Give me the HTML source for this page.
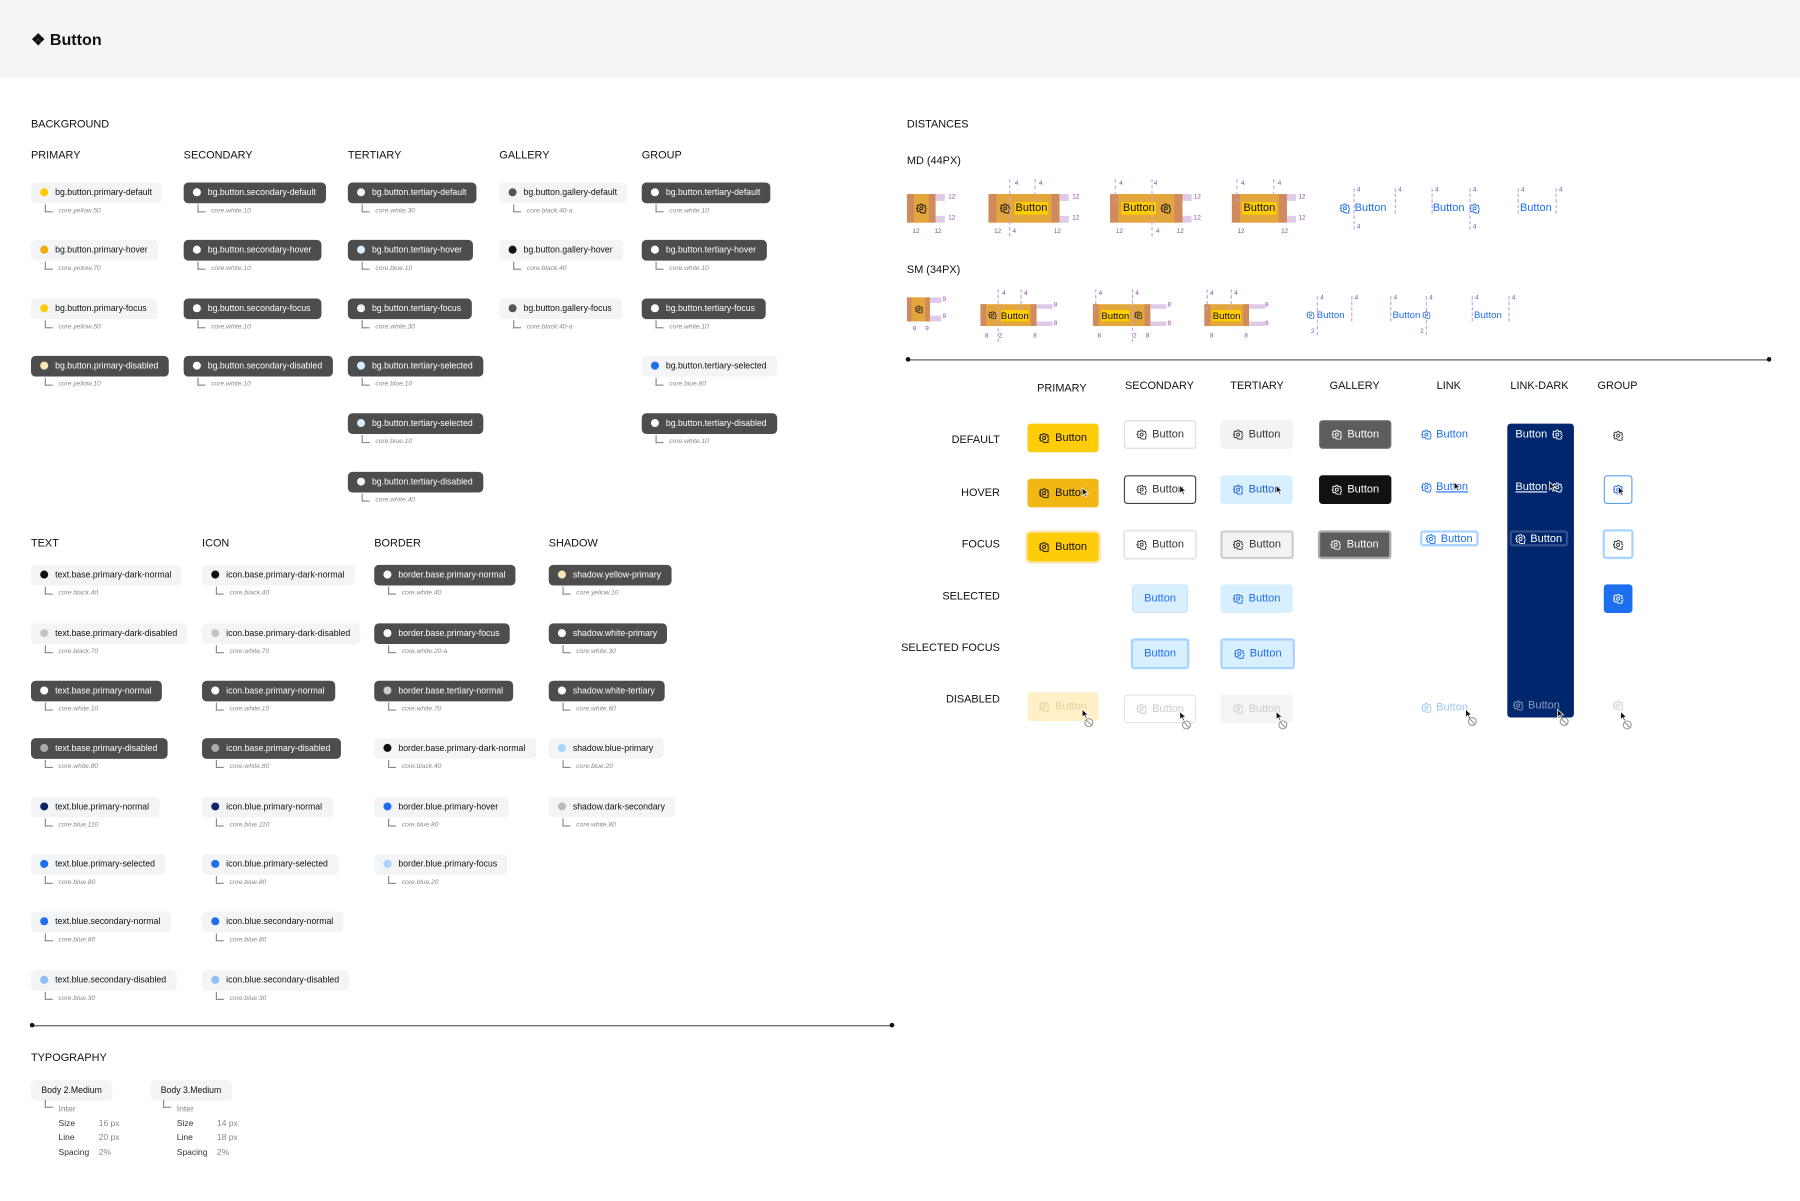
<!DOCTYPE html>
<html><head><meta charset="utf-8">
<style>
*{margin:0;padding:0;box-sizing:border-box}
html,body{width:1800px;height:1201px;overflow:hidden;background:#fff}
#w{position:absolute;left:0;top:0;width:1568px;height:1046px;transform:scale(1.148);transform-origin:0 0;font-family:"Liberation Sans",sans-serif;color:#111}
.hd{position:absolute;left:0;top:0;width:1568px;height:68px;background:#f5f5f5}
.h{position:absolute;font-size:9.5px;color:#111;white-space:nowrap;line-height:12px}
.t{position:absolute}
.c{display:inline-flex;align-items:center;height:18px;padding:0 9px 0 8px;border-radius:4px;background:#f3f4f6;font-size:7.6px;color:#111;white-space:nowrap}
.c.d{background:#4d4d4d;color:#fff}
.c i{width:7px;height:7px;border-radius:50%;margin-right:6px;display:inline-block;flex:none}
.s{position:relative;margin:1px 0 0 12px;height:12px;font-size:5.8px;font-style:italic;color:#888;padding-left:12px;line-height:12px;white-space:nowrap}
.s:before{content:"";position:absolute;left:0;top:0;width:6px;height:6px;border-left:1px solid #888;border-bottom:1px solid #888}
.b{position:absolute;height:25px;border-radius:3px;display:flex;align-items:center;justify-content:center;gap:5px;font-size:9.6px;white-space:nowrap}
.b svg,.g{width:9px;height:9px;flex:none}
.rl{position:absolute;font-size:9.5px;text-align:right;width:120px;white-space:nowrap}
.ch{position:absolute;font-size:9.5px;text-align:center;width:80px}
.m{position:absolute;background:#e3a63c;display:flex;align-items:center;justify-content:center;gap:4px;font-size:9.6px}
.pl{position:absolute;background:rgba(196,160,215,.55)}
.pn{position:absolute;font-size:5.5px;color:#8b4aa3}
.vl{position:absolute;width:1px;border-left:1px dashed #c7a3d6}
.lk{position:absolute;display:flex;align-items:center;gap:4px;font-size:9.6px;color:#1d6ff0;white-space:nowrap}
</style></head><body>
<svg width="0" height="0" style="position:absolute">
<defs>
<symbol id="gr" viewBox="0 0 24 24"><path fill="none" stroke="currentColor" stroke-width="2" d="M10 2h4l.6 2.9 2 .9 2.5-1.6 2.8 2.8-1.6 2.5.9 2 2.8.5v4l-2.8.6-.9 2 1.6 2.5-2.8 2.8-2.5-1.6-2 .9L14 22h-4l-.6-2.9-2-.9-2.5 1.6-2.8-2.8 1.6-2.5-.9-2L0 12.5v-1l2.8-.6.9-2L2.1 6.4 4.9 3.6l2.5 1.6 2-.9z"/><circle cx="12" cy="12" r="3.5" fill="none" stroke="currentColor" stroke-width="2"/></symbol>
<symbol id="cur" viewBox="0 0 10 14"><path d="M1 1v10l2.5-2.3 1.8 4 1.6-.7-1.8-3.9H8.5z" fill="#111" stroke="#fff" stroke-width=".9"/></symbol>
<symbol id="no" viewBox="0 0 12 12"><circle cx="6" cy="6" r="4.6" fill="#fff" stroke="#999" stroke-width="1.3"/><path d="M3 3l6 6" stroke="#999" stroke-width="1.3"/></symbol>
</defs></svg>
<div id="w">
<div class="hd"></div>
<div style="position:absolute;left:27px;top:26px;font-size:14px;font-weight:bold;line-height:16px">❖ Button</div>

<div class="h" style="left:27px;top:103px">BACKGROUND</div>
<div class="h" style="left:27px;top:130px">PRIMARY</div>
<div class="h" style="left:160px;top:130px">SECONDARY</div>
<div class="h" style="left:303px;top:130px">TERTIARY</div>
<div class="h" style="left:435px;top:130px">GALLERY</div>
<div class="h" style="left:559px;top:130px">GROUP</div>

<!-- primary -->
<div class="t" style="left:27px;top:158px"><div class="c"><i style="background:#ffc800"></i>bg.button.primary-default</div><div class="s">core.yellow.50</div></div>
<div class="t" style="left:27px;top:208px"><div class="c"><i style="background:#f2ab00"></i>bg.button.primary-hover</div><div class="s">core.yellow.70</div></div>
<div class="t" style="left:27px;top:259px"><div class="c"><i style="background:#ffcc00"></i>bg.button.primary-focus</div><div class="s">core.yellow.50</div></div>
<div class="t" style="left:27px;top:309px"><div class="c d"><i style="background:#fbe7b5"></i>bg.button.primary-disabled</div><div class="s">core.yellow.10</div></div>
<!-- secondary -->
<div class="t" style="left:160px;top:158px"><div class="c d"><i style="background:#fff"></i>bg.button.secondary-default</div><div class="s">core.white.10</div></div>
<div class="t" style="left:160px;top:208px"><div class="c d"><i style="background:#fff"></i>bg.button.secondary-hover</div><div class="s">core.white.10</div></div>
<div class="t" style="left:160px;top:259px"><div class="c d"><i style="background:#fff"></i>bg.button.secondary-focus</div><div class="s">core.white.10</div></div>
<div class="t" style="left:160px;top:309px"><div class="c d"><i style="background:#fff"></i>bg.button.secondary-disabled</div><div class="s">core.white.10</div></div>
<!-- tertiary -->
<div class="t" style="left:303px;top:158px"><div class="c d"><i style="background:#f4f4f4"></i>bg.button.tertiary-default</div><div class="s">core.white.30</div></div>
<div class="t" style="left:303px;top:208px"><div class="c d"><i style="background:#d8efff"></i>bg.button.tertiary-hover</div><div class="s">core.blue.10</div></div>
<div class="t" style="left:303px;top:259px"><div class="c d"><i style="background:#f4f4f4"></i>bg.button.tertiary-focus</div><div class="s">core.white.30</div></div>
<div class="t" style="left:303px;top:309px"><div class="c d"><i style="background:#d8efff"></i>bg.button.tertiary-selected</div><div class="s">core.blue.10</div></div>
<div class="t" style="left:303px;top:359px"><div class="c d"><i style="background:#d8efff"></i>bg.button.tertiary-selected</div><div class="s">core.blue.10</div></div>
<div class="t" style="left:303px;top:410px"><div class="c d"><i style="background:#f4f4f4"></i>bg.button.tertiary-disabled</div><div class="s">core.white.40</div></div>
<!-- gallery -->
<div class="t" style="left:435px;top:158px"><div class="c"><i style="background:#555"></i>bg.button.gallery-default</div><div class="s">core.black.40-a</div></div>
<div class="t" style="left:435px;top:208px"><div class="c"><i style="background:#111"></i>bg.button.gallery-hover</div><div class="s">core.black.40</div></div>
<div class="t" style="left:435px;top:259px"><div class="c"><i style="background:#555"></i>bg.button.gallery-focus</div><div class="s">core.black.40-a</div></div>
<!-- group -->
<div class="t" style="left:559px;top:158px"><div class="c d"><i style="background:#fff"></i>bg.button.tertiary-default</div><div class="s">core.white.10</div></div>
<div class="t" style="left:559px;top:208px"><div class="c d"><i style="background:#fff"></i>bg.button.tertiary-hover</div><div class="s">core.white.10</div></div>
<div class="t" style="left:559px;top:259px"><div class="c d"><i style="background:#fff"></i>bg.button.tertiary-focus</div><div class="s">core.white.10</div></div>
<div class="t" style="left:559px;top:309px"><div class="c"><i style="background:#1d6ff0"></i>bg.button.tertiary-selected</div><div class="s">core.blue.80</div></div>
<div class="t" style="left:559px;top:359px"><div class="c d"><i style="background:#fff"></i>bg.button.tertiary-disabled</div><div class="s">core.white.10</div></div>

<div class="h" style="left:27px;top:468px">TEXT</div>
<div class="h" style="left:176px;top:468px">ICON</div>
<div class="h" style="left:326px;top:468px">BORDER</div>
<div class="h" style="left:478px;top:468px">SHADOW</div>

<div class="t" style="left:27px;top:491px"><div class="c"><i style="background:#111"></i>text.base.primary-dark-normal</div><div class="s">core.black.40</div></div>
<div class="t" style="left:27px;top:542px"><div class="c"><i style="background:#c4c4c4"></i>text.base.primary-dark-disabled</div><div class="s">core.black.70</div></div>
<div class="t" style="left:27px;top:592px"><div class="c d"><i style="background:#fff"></i>text.base.primary-normal</div><div class="s">core.white.10</div></div>
<div class="t" style="left:27px;top:642px"><div class="c d"><i style="background:#aaa"></i>text.base.primary-disabled</div><div class="s">core.white.80</div></div>
<div class="t" style="left:27px;top:693px"><div class="c"><i style="background:#0b2766"></i>text.blue.primary-normal</div><div class="s">core.blue.110</div></div>
<div class="t" style="left:27px;top:743px"><div class="c"><i style="background:#1d6ff0"></i>text.blue.primary-selected</div><div class="s">core.blue.80</div></div>
<div class="t" style="left:27px;top:793px"><div class="c"><i style="background:#1d6ff0"></i>text.blue.secondary-normal</div><div class="s">core.blue.80</div></div>
<div class="t" style="left:27px;top:844px"><div class="c"><i style="background:#8fbff5"></i>text.blue.secondary-disabled</div><div class="s">core.blue.30</div></div>

<div class="t" style="left:176px;top:491px"><div class="c"><i style="background:#111"></i>icon.base.primary-dark-normal</div><div class="s">core.black.40</div></div>
<div class="t" style="left:176px;top:542px"><div class="c"><i style="background:#c4c4c4"></i>icon.base.primary-dark-disabled</div><div class="s">core.white.70</div></div>
<div class="t" style="left:176px;top:592px"><div class="c d"><i style="background:#fff"></i>icon.base.primary-normal</div><div class="s">core.white.10</div></div>
<div class="t" style="left:176px;top:642px"><div class="c d"><i style="background:#aaa"></i>icon.base.primary-disabled</div><div class="s">core.white.80</div></div>
<div class="t" style="left:176px;top:693px"><div class="c"><i style="background:#0b2766"></i>icon.blue.primary-normal</div><div class="s">core.blue.110</div></div>
<div class="t" style="left:176px;top:743px"><div class="c"><i style="background:#1d6ff0"></i>icon.blue.primary-selected</div><div class="s">core.blue.80</div></div>
<div class="t" style="left:176px;top:793px"><div class="c"><i style="background:#1d6ff0"></i>icon.blue.secondary-normal</div><div class="s">core.blue.80</div></div>
<div class="t" style="left:176px;top:844px"><div class="c"><i style="background:#8fbff5"></i>icon.blue.secondary-disabled</div><div class="s">core.blue.30</div></div>

<div class="t" style="left:326px;top:491px"><div class="c d"><i style="background:#fff"></i>border.base.primary-normal</div><div class="s">core.white.40</div></div>
<div class="t" style="left:326px;top:542px"><div class="c d"><i style="background:#fff"></i>border.base.primary-focus</div><div class="s">core.white.20-a</div></div>
<div class="t" style="left:326px;top:592px"><div class="c d"><i style="background:#ccc"></i>border.base.tertiary-normal</div><div class="s">core.white.70</div></div>
<div class="t" style="left:326px;top:642px"><div class="c"><i style="background:#111"></i>border.base.primary-dark-normal</div><div class="s">core.black.40</div></div>
<div class="t" style="left:326px;top:693px"><div class="c"><i style="background:#1d6ff0"></i>border.blue.primary-hover</div><div class="s">core.blue.80</div></div>
<div class="t" style="left:326px;top:743px"><div class="c"><i style="background:#a9d4ff"></i>border.blue.primary-focus</div><div class="s">core.blue.20</div></div>

<div class="t" style="left:478px;top:491px"><div class="c d"><i style="background:#fbe7b5"></i>shadow.yellow-primary</div><div class="s">core.yellow.10</div></div>
<div class="t" style="left:478px;top:542px"><div class="c d"><i style="background:#fff"></i>shadow.white-primary</div><div class="s">core.white.30</div></div>
<div class="t" style="left:478px;top:592px"><div class="c d"><i style="background:#fff"></i>shadow.white-tertiary</div><div class="s">core.white.60</div></div>
<div class="t" style="left:478px;top:642px"><div class="c"><i style="background:#a9d4ff"></i>shadow.blue-primary</div><div class="s">core.blue.20</div></div>
<div class="t" style="left:478px;top:693px"><div class="c"><i style="background:#bbb"></i>shadow.dark-secondary</div><div class="s">core.white.80</div></div>

<!-- left divider -->
<div style="position:absolute;left:27px;top:893px;width:751px;height:1px;background:#555"></div>
<div style="position:absolute;left:26px;top:891px;width:4px;height:4px;border-radius:50%;background:#111"></div>
<div style="position:absolute;left:775px;top:891px;width:4px;height:4px;border-radius:50%;background:#111"></div>

<div class="h" style="left:27px;top:916px">TYPOGRAPHY</div>
<div class="t" style="left:27px;top:939px"><div class="c" style="padding:0 9px">Body 2.Medium</div></div>
<div class="t" style="left:131px;top:939px"><div class="c" style="padding:0 9px">Body 3.Medium</div></div>
<div style="position:absolute;left:39px;top:958px;width:7px;height:7px;border-left:1px solid #888;border-bottom:1px solid #888"></div>
<div style="position:absolute;left:142px;top:958px;width:7px;height:7px;border-left:1px solid #888;border-bottom:1px solid #888"></div>
<div style="position:absolute;left:51px;top:960px;font-size:7.4px;color:#888;line-height:12.5px">Inter<br><span style="color:#333">Size</span><br><span style="color:#333">Line</span><br><span style="color:#333">Spacing</span></div>
<div style="position:absolute;left:86px;top:972.5px;font-size:7.4px;color:#888;line-height:12.5px">16 px<br>20 px<br>2%</div>
<div style="position:absolute;left:154px;top:960px;font-size:7.4px;color:#888;line-height:12.5px">Inter<br><span style="color:#333">Size</span><br><span style="color:#333">Line</span><br><span style="color:#333">Spacing</span></div>
<div style="position:absolute;left:189px;top:972.5px;font-size:7.4px;color:#888;line-height:12.5px">14 px<br>18 px<br>2%</div>

<!-- DISTANCES -->
<div class="h" style="left:790px;top:103px">DISTANCES</div>
<div class="h" style="left:790px;top:135px">MD (44PX)</div>
<div class="h" style="left:790px;top:230px">SM (34PX)</div>

<!-- MD -->
<div class="m" style="left:790px;top:169px;width:25px;height:25px;box-shadow:inset 6px 0 #cf8a5e,inset -6px 0 #cf8a5e"><svg class="g"><use href="#gr"/></svg></div>
<div class="pl" style="left:815px;top:169px;width:8px;height:6px"></div><div class="pn" style="left:826px;top:169px">12</div>
<div class="pl" style="left:815px;top:188px;width:8px;height:6px"></div><div class="pn" style="left:826px;top:187px">12</div>
<div class="pn" style="left:795px;top:199px">12</div><div class="pn" style="left:814px;top:199px">12</div>

<div class="m" style="left:861px;top:169px;width:62px;height:25px;box-shadow:inset 7px 0 #cf8a5e,inset -7px 0 #cf8a5e"><svg class="g"><use href="#gr"/></svg><span style="background:#ffcc00;padding:0 1px">Button</span></div>
<div class="pl" style="left:923px;top:169px;width:8px;height:6px"></div><div class="pn" style="left:934px;top:169px">12</div>
<div class="pl" style="left:923px;top:188px;width:8px;height:6px"></div><div class="pn" style="left:934px;top:187px">12</div>
<div class="pn" style="left:866px;top:199px">12</div><div class="pn" style="left:882px;top:199px">4</div><div class="pn" style="left:918px;top:199px">12</div>
<div class="pn" style="left:884px;top:157px">4</div><div class="pn" style="left:905px;top:157px">4</div>
<div class="vl" style="left:879px;top:156px;height:50px"></div><div class="vl" style="left:901px;top:156px;height:20px"></div>

<div class="m" style="left:967px;top:169px;width:63px;height:25px;box-shadow:inset 7px 0 #cf8a5e,inset -7px 0 #cf8a5e"><span style="background:#ffcc00;padding:0 1px">Button</span><svg class="g"><use href="#gr"/></svg></div>
<div class="pl" style="left:1030px;top:169px;width:8px;height:6px"></div><div class="pn" style="left:1040px;top:169px">12</div>
<div class="pl" style="left:1030px;top:188px;width:8px;height:6px"></div><div class="pn" style="left:1040px;top:187px">12</div>
<div class="pn" style="left:972px;top:199px">12</div><div class="pn" style="left:1007px;top:199px">4</div><div class="pn" style="left:1025px;top:199px">12</div>
<div class="pn" style="left:975px;top:157px">4</div><div class="pn" style="left:1005px;top:157px">4</div>
<div class="vl" style="left:971px;top:156px;height:20px"></div><div class="vl" style="left:1003px;top:156px;height:50px"></div>

<div class="m" style="left:1073px;top:169px;width:48px;height:25px;box-shadow:inset 7px 0 #cf8a5e,inset -7px 0 #cf8a5e"><span style="background:#ffcc00;padding:0 1px">Button</span></div>
<div class="pl" style="left:1121px;top:169px;width:8px;height:6px"></div><div class="pn" style="left:1131px;top:169px">12</div>
<div class="pl" style="left:1121px;top:188px;width:8px;height:6px"></div><div class="pn" style="left:1131px;top:187px">12</div>
<div class="pn" style="left:1078px;top:199px">12</div><div class="pn" style="left:1116px;top:199px">12</div>
<div class="pn" style="left:1081px;top:157px">4</div><div class="pn" style="left:1113px;top:157px">4</div>
<div class="vl" style="left:1077px;top:156px;height:20px"></div><div class="vl" style="left:1109px;top:156px;height:20px"></div>

<div class="lk" style="left:1167px;top:176px"><svg class="g"><use href="#gr"/></svg>Button</div>
<div class="vl" style="left:1179px;top:164px;height:36px"></div><div class="vl" style="left:1215px;top:164px;height:22px"></div>
<div class="pn" style="left:1182px;top:163px">4</div><div class="pn" style="left:1218px;top:163px">4</div><div class="pn" style="left:1182px;top:195px">4</div>
<div class="lk" style="left:1248px;top:176px">Button<svg class="g"><use href="#gr"/></svg></div>
<div class="vl" style="left:1247px;top:164px;height:22px"></div><div class="vl" style="left:1280px;top:164px;height:36px"></div>
<div class="pn" style="left:1250px;top:163px">4</div><div class="pn" style="left:1283px;top:163px">4</div><div class="pn" style="left:1283px;top:195px">4</div>
<div class="lk" style="left:1324px;top:176px">Button</div>
<div class="vl" style="left:1322px;top:164px;height:22px"></div><div class="vl" style="left:1355px;top:164px;height:22px"></div>
<div class="pn" style="left:1325px;top:163px">4</div><div class="pn" style="left:1358px;top:163px">4</div>

<!-- SM -->
<div class="m" style="left:790px;top:259px;width:20px;height:21px;box-shadow:inset 4px 0 #cf8a5e,inset -4px 0 #cf8a5e"><svg style="width:7px;height:7px"><use href="#gr"/></svg></div>
<div class="pl" style="left:810px;top:259px;width:10px;height:5px"></div><div class="pn" style="left:821px;top:258px">9</div>
<div class="pl" style="left:810px;top:275px;width:10px;height:5px"></div><div class="pn" style="left:821px;top:273px">9</div>
<div class="pn" style="left:795px;top:284px">9</div><div class="pn" style="left:806px;top:284px">9</div>

<div class="m" style="left:854px;top:265px;width:49px;height:19px;font-size:8.4px;box-shadow:inset 5px 0 #cf8a5e,inset -5px 0 #cf8a5e"><svg style="width:7px;height:7px"><use href="#gr"/></svg><span style="background:#ffcc00">Button</span></div>
<div class="pl" style="left:903px;top:265px;width:14px;height:4px"></div><div class="pn" style="left:918px;top:263px">8</div>
<div class="pl" style="left:903px;top:280px;width:14px;height:4px"></div><div class="pn" style="left:918px;top:279px">8</div>
<div class="pn" style="left:858px;top:290px">8</div><div class="pn" style="left:870px;top:290px">2</div><div class="pn" style="left:900px;top:290px">8</div>
<div class="pn" style="left:873px;top:253px">4</div><div class="pn" style="left:892px;top:253px">4</div>
<div class="vl" style="left:869px;top:252px;height:46px"></div><div class="vl" style="left:889px;top:252px;height:18px"></div>

<div class="m" style="left:952px;top:265px;width:50px;height:19px;font-size:8.4px;box-shadow:inset 5px 0 #cf8a5e,inset -5px 0 #cf8a5e"><span style="background:#ffcc00">Button</span><svg style="width:7px;height:7px"><use href="#gr"/></svg></div>
<div class="pl" style="left:1002px;top:265px;width:14px;height:4px"></div><div class="pn" style="left:1017px;top:263px">8</div>
<div class="pl" style="left:1002px;top:280px;width:14px;height:4px"></div><div class="pn" style="left:1017px;top:279px">8</div>
<div class="pn" style="left:956px;top:290px">8</div><div class="pn" style="left:987px;top:290px">2</div><div class="pn" style="left:998px;top:290px">8</div>
<div class="pn" style="left:957px;top:253px">4</div><div class="pn" style="left:989px;top:253px">4</div>
<div class="vl" style="left:954px;top:252px;height:18px"></div><div class="vl" style="left:986px;top:252px;height:46px"></div>

<div class="m" style="left:1049px;top:265px;width:39px;height:19px;font-size:8.4px;box-shadow:inset 5px 0 #cf8a5e,inset -5px 0 #cf8a5e"><span style="background:#ffcc00">Button</span></div>
<div class="pl" style="left:1088px;top:265px;width:14px;height:4px"></div><div class="pn" style="left:1102px;top:263px">8</div>
<div class="pl" style="left:1088px;top:280px;width:14px;height:4px"></div><div class="pn" style="left:1102px;top:279px">8</div>
<div class="pn" style="left:1054px;top:290px">8</div><div class="pn" style="left:1084px;top:290px">8</div>
<div class="pn" style="left:1054px;top:253px">4</div><div class="pn" style="left:1075px;top:253px">4</div>
<div class="vl" style="left:1051px;top:252px;height:18px"></div><div class="vl" style="left:1072px;top:252px;height:18px"></div>

<div class="lk" style="left:1138px;top:269px;font-size:8.4px;gap:2px"><svg style="width:7px;height:7px"><use href="#gr"/></svg>Button</div>
<div class="vl" style="left:1147px;top:258px;height:34px"></div><div class="vl" style="left:1177px;top:258px;height:22px"></div>
<div class="pn" style="left:1150px;top:257px">4</div><div class="pn" style="left:1180px;top:257px">4</div><div class="pn" style="left:1142px;top:286px">2</div>
<div class="lk" style="left:1213px;top:269px;font-size:8.4px;gap:2px">Button<svg style="width:7px;height:7px"><use href="#gr"/></svg></div>
<div class="vl" style="left:1211px;top:258px;height:22px"></div><div class="vl" style="left:1242px;top:258px;height:34px"></div>
<div class="pn" style="left:1214px;top:257px">4</div><div class="pn" style="left:1245px;top:257px">4</div><div class="pn" style="left:1237px;top:286px">2</div>
<div class="lk" style="left:1284px;top:269px;font-size:8.4px">Button</div>
<div class="vl" style="left:1282px;top:258px;height:22px"></div><div class="vl" style="left:1314px;top:258px;height:22px"></div>
<div class="pn" style="left:1285px;top:257px">4</div><div class="pn" style="left:1317px;top:257px">4</div>

<!-- right divider -->
<div style="position:absolute;left:790px;top:313px;width:752px;height:1px;background:#555"></div>
<div style="position:absolute;left:789px;top:311px;width:4px;height:4px;border-radius:50%;background:#111"></div>
<div style="position:absolute;left:1539px;top:311px;width:4px;height:4px;border-radius:50%;background:#111"></div>

<div class="ch" style="left:885px;top:333px">PRIMARY</div>
<div class="ch" style="left:970px;top:331px">SECONDARY</div>
<div class="ch" style="left:1055px;top:331px">TERTIARY</div>
<div class="ch" style="left:1140px;top:331px">GALLERY</div>
<div class="ch" style="left:1222px;top:331px">LINK</div>
<div class="ch" style="left:1301px;top:331px">LINK-DARK</div>
<div class="ch" style="left:1369px;top:331px">GROUP</div>

<div class="rl" style="left:751px;top:378px">DEFAULT</div>
<div class="rl" style="left:751px;top:424px">HOVER</div>
<div class="rl" style="left:751px;top:469px">FOCUS</div>
<div class="rl" style="left:751px;top:514px">SELECTED</div>
<div class="rl" style="left:751px;top:559px">SELECTED FOCUS</div>
<div class="rl" style="left:751px;top:604px">DISABLED</div>

<!-- link-dark panel -->
<div style="position:absolute;left:1313px;top:369px;width:58px;height:256px;background:#00266e;border-radius:3px"></div>

<!-- DEFAULT -->
<div class="b" style="left:895px;top:369px;width:62px;background:#ffcc0a"><svg><use href="#gr"/></svg>Button</div>
<div class="b" style="left:979px;top:366px;width:63px;background:#fff;border:1px solid #ddd;color:#333"><svg><use href="#gr"/></svg>Button</div>
<div class="b" style="left:1063px;top:366px;width:63px;background:#f3f3f3;color:#333"><svg><use href="#gr"/></svg>Button</div>
<div class="b" style="left:1149px;top:366px;width:63px;background:#5d5d5d;color:#fff;border:1px solid #777"><svg><use href="#gr"/></svg>Button</div>
<div class="lk" style="left:1238px;top:373px"><svg class="g"><use href="#gr"/></svg>Button</div>
<div class="lk" style="left:1320px;top:373px;color:#fff">Button<svg class="g"><use href="#gr"/></svg></div>
<svg class="g" style="position:absolute;left:1405px;top:375px;color:#333"><use href="#gr"/></svg>

<!-- HOVER -->
<div class="b" style="left:895px;top:417px;width:62px;background:#f1b714"><svg><use href="#gr"/></svg>Button</div>
<div class="b" style="left:979px;top:414px;width:63px;background:#fff;border:1px solid #444;color:#333"><svg><use href="#gr"/></svg>Button</div>
<div class="b" style="left:1063px;top:414px;width:63px;background:#d8efff;color:#1d5fd0"><svg><use href="#gr"/></svg>Button</div>
<div class="b" style="left:1149px;top:414px;width:63px;background:#111;color:#fff"><svg><use href="#gr"/></svg>Button</div>
<div class="lk" style="left:1238px;top:419px"><svg class="g"><use href="#gr"/></svg><span style="text-decoration:underline">Button</span></div>
<div class="lk" style="left:1320px;top:419px;color:#fff"><span style="text-decoration:underline">Button</span><svg class="g"><use href="#gr"/></svg></div>
<div class="b" style="left:1397px;top:414px;width:25px;background:#fff;border:1px solid #5fa0f5;color:#1d6ff0"><svg><use href="#gr"/></svg></div>

<!-- FOCUS -->
<div class="b" style="left:895px;top:464px;width:62px;background:#ffcc0a;box-shadow:0 0 0 2px #fbe7b5"><svg><use href="#gr"/></svg>Button</div>
<div class="b" style="left:979px;top:462px;width:63px;background:#fff;border:1px solid #e2e2e2;box-shadow:0 0 0 1px #f0f0f0;color:#333"><svg><use href="#gr"/></svg>Button</div>
<div class="b" style="left:1063px;top:462px;width:64px;background:#f3f3f3;border:2px solid #cfcfcf;color:#333"><svg><use href="#gr"/></svg>Button</div>
<div class="b" style="left:1148px;top:462px;width:64px;background:#5d5d5d;color:#fff;border:2px solid #a9a9a9"><svg><use href="#gr"/></svg>Button</div>
<div class="lk" style="left:1237px;top:462px;border:2px solid #a9d4ff;border-radius:3px;padding:0 3px;height:14px"><svg class="g"><use href="#gr"/></svg>Button</div>
<div class="lk" style="left:1315px;top:462px;color:#fff;border:2px solid #33508e;border-radius:3px;padding:0 3px;height:14px"><svg class="g"><use href="#gr"/></svg>Button</div>
<div class="b" style="left:1396px;top:461px;width:27px;height:26px;background:#fff;border:2px solid #a9d4ff;color:#333"><svg><use href="#gr"/></svg></div>

<!-- SELECTED -->
<div class="b" style="left:986px;top:509px;width:49px;background:#d8efff;color:#1d6ff0;border:1px solid #cde4f7">Button</div>
<div class="b" style="left:1063px;top:509px;width:63px;background:#d8efff;color:#1d6ff0"><svg><use href="#gr"/></svg>Button</div>
<div class="b" style="left:1397px;top:509px;width:25px;background:#1d6ff0;color:#fff"><svg><use href="#gr"/></svg></div>

<!-- SELECTED FOCUS -->
<div class="b" style="left:985px;top:556px;width:51px;height:27px;background:#d8efff;color:#1d6ff0;border:2px solid #a9d4ff">Button</div>
<div class="b" style="left:1063px;top:556px;width:65px;height:27px;background:#d8efff;color:#1d6ff0;border:2px solid #a9d4ff"><svg><use href="#gr"/></svg>Button</div>

<!-- DISABLED -->
<div class="b" style="left:895px;top:603px;width:62px;background:#fff0c8;color:#e3d09c"><svg><use href="#gr"/></svg>Button</div>
<div class="b" style="left:979px;top:605px;width:63px;background:#fff;border:1px solid #e4e4e4;color:#ccc"><svg><use href="#gr"/></svg>Button</div>
<div class="b" style="left:1063px;top:605px;width:63px;background:#f5f5f5;color:#ccc"><svg><use href="#gr"/></svg>Button</div>
<div class="lk" style="left:1238px;top:611px;color:#9cc5f6"><svg class="g"><use href="#gr"/></svg>Button</div>
<div class="lk" style="left:1318px;top:609px;color:#8d9bbb"><svg class="g"><use href="#gr"/></svg>Button</div>
<svg class="g" style="position:absolute;left:1405px;top:610px;color:#ccc"><use href="#gr"/></svg>

<!-- cursors -->
<svg style="position:absolute;left:942px;top:424px;width:7px;height:10px"><use href="#cur"/></svg>
<svg style="position:absolute;left:1027px;top:422px;width:7px;height:10px"><use href="#cur"/></svg>
<svg style="position:absolute;left:1111px;top:422px;width:7px;height:10px"><use href="#cur"/></svg>
<svg style="position:absolute;left:1266px;top:419px;width:7px;height:10px"><use href="#cur"/></svg>
<svg style="position:absolute;left:1349px;top:419px;width:7px;height:10px"><use href="#cur"/></svg>
<svg style="position:absolute;left:1409px;top:423px;width:7px;height:10px"><use href="#cur"/></svg>
<svg style="position:absolute;left:942px;top:617px;width:7px;height:10px"><use href="#cur"/></svg><svg style="position:absolute;left:944px;top:625px;width:9px;height:9px"><use href="#no"/></svg>
<svg style="position:absolute;left:1027px;top:619px;width:7px;height:10px"><use href="#cur"/></svg><svg style="position:absolute;left:1029px;top:627px;width:9px;height:9px"><use href="#no"/></svg>
<svg style="position:absolute;left:1111px;top:619px;width:7px;height:10px"><use href="#cur"/></svg><svg style="position:absolute;left:1113px;top:627px;width:9px;height:9px"><use href="#no"/></svg>
<svg style="position:absolute;left:1276px;top:617px;width:7px;height:10px"><use href="#cur"/></svg><svg style="position:absolute;left:1278px;top:624px;width:9px;height:9px"><use href="#no"/></svg>
<svg style="position:absolute;left:1356px;top:617px;width:7px;height:10px"><use href="#cur"/></svg><svg style="position:absolute;left:1358px;top:624px;width:9px;height:9px"><use href="#no"/></svg>
<svg style="position:absolute;left:1411px;top:619px;width:7px;height:10px"><use href="#cur"/></svg><svg style="position:absolute;left:1413px;top:627px;width:9px;height:9px"><use href="#no"/></svg>
</div>
</body></html>
